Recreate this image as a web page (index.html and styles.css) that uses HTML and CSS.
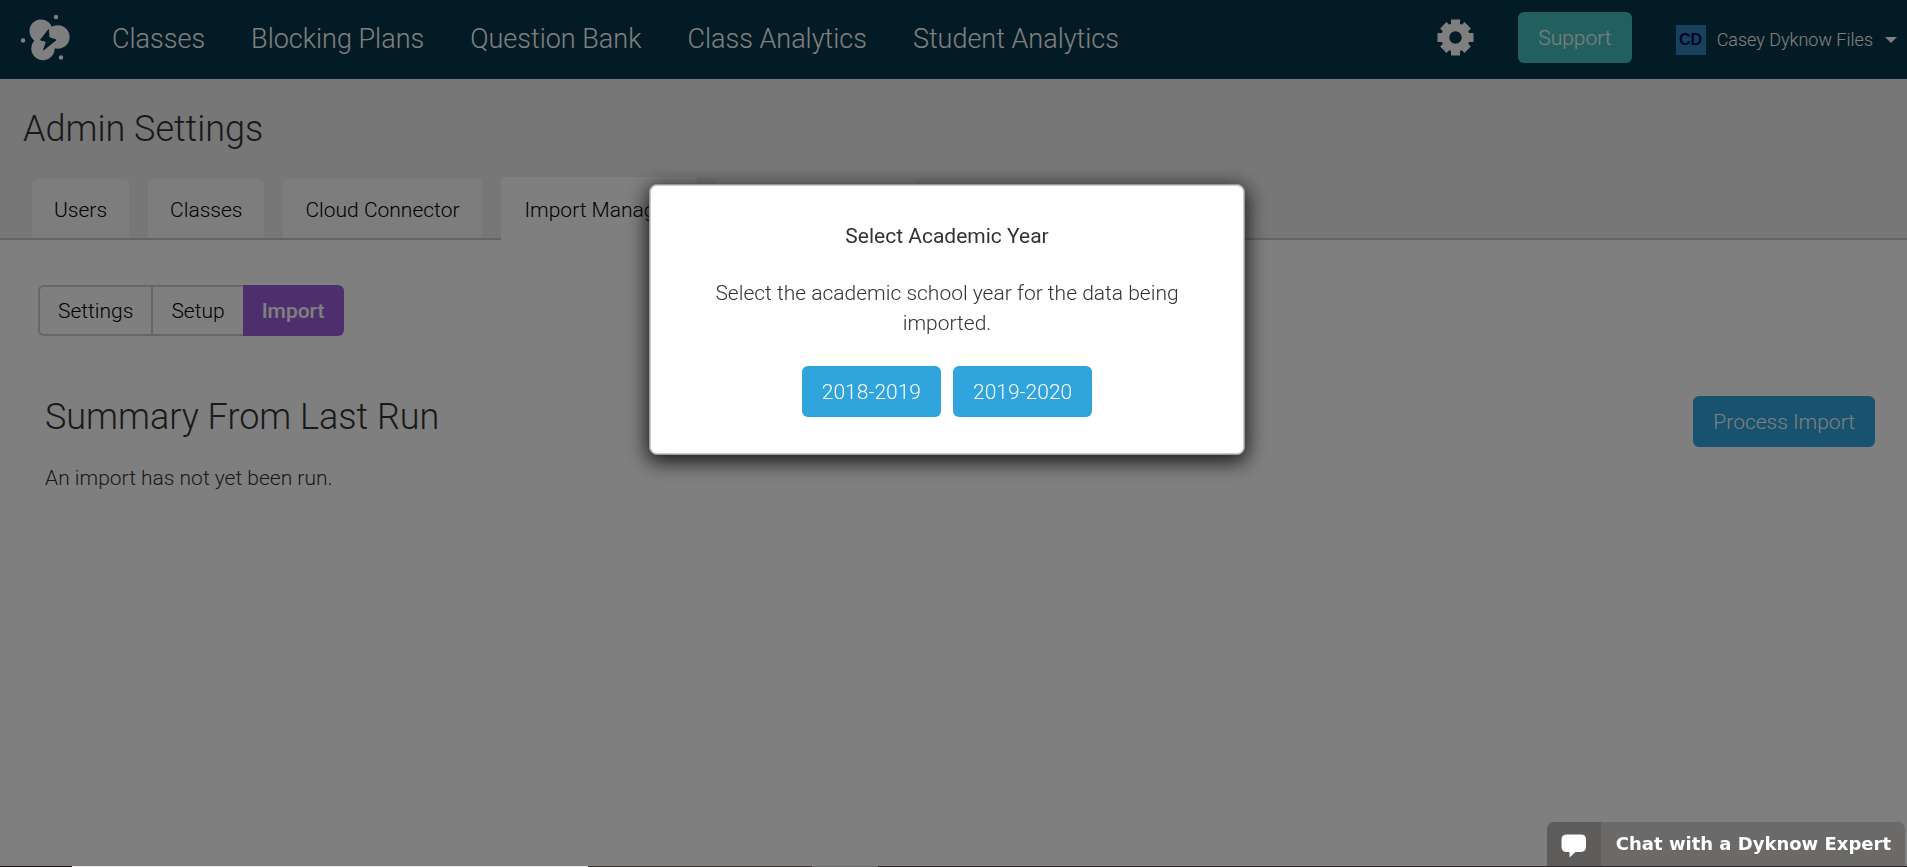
FILE: index.html
```html
<!DOCTYPE html>
<html lang="en">
<head>
    <meta charset="UTF-8">
    <meta name="viewport" content="width=device-width, initial-scale=1.0">
    <title>Admin Settings</title>
    <link rel="stylesheet" href="styles.css">
</head>
<body>
    <header class="navbar">
        <a href="#" class="logo" aria-label="Home">
            <svg width="50" height="48" viewBox="0 0 50 48">
                <g fill="#fff">
                    <circle cx="21" cy="17" r="11.5"/>
                    <circle cx="37.800" cy="23" r="11.800"/>
                    <circle cx="23" cy="34.500" r="11.700"/>
                    <path d="M21 17L37.800 23L23 34.500z" stroke="#fff" stroke-width="8" stroke-linejoin="round"/>
                    <circle cx="36" cy="3" r="2.200"/>
                    <circle cx="3" cy="26.500" r="2.200"/>
                    <circle cx="41" cy="43.500" r="2.200"/>
                </g>
                <path d="M28.500 15.500L20.500 26L26.500 27.500L23.500 36L36 26L29 23.500z" fill="#07364a" stroke="#07364a" stroke-width="1" stroke-linejoin="round"/>
            </svg>
        </a>
        <nav class="nav-links">
            <a href="#">Classes</a>
            <a href="#">Blocking Plans</a>
            <a href="#">Question Bank</a>
            <a href="#">Class Analytics</a>
            <a href="#">Student Analytics</a>
        </nav>
        <a href="#" class="gear" aria-label="Settings">
            <svg width="37" height="37" viewBox="0 0 37 37">
                <g stroke="#fff" stroke-width="9">
                    <path d="M18.500 0.500v8M18.500 28.500v8M0.500 18.500h8M28.500 18.500h8"/>
                    <path d="M6.300 6.300l5 5M25.700 25.700l5 5M6.300 30.700l5-5M25.700 11.300l5-5"/>
                </g>
                <circle cx="18.500" cy="18.500" r="10.200" fill="none" stroke="#fff" stroke-width="8"/>
            </svg>
        </a>
        <button type="button" class="btn btn-support">Support</button>
        <button type="button" class="user-menu">
            <span class="avatar">CD</span>
            <span>Casey Dyknow Files</span>
            <span class="caret"></span>
        </button>
    </header>

    <div class="page-head">
        <h1>Admin Settings</h1>
        <nav class="tabs">
            <a href="#" class="tab">Users</a>
            <a href="#" class="tab">Classes</a>
            <a href="#" class="tab">Cloud Connector</a>
            <a href="#" class="tab active">Import Manager</a>
            <a href="#" class="tab">Account Settings</a>
        </nav>
    </div>

    <main class="content">
        <div class="segments">
            <button type="button">Settings</button>
            <button type="button">Setup</button>
            <button type="button" class="active">Import</button>
        </div>
        <div class="summary">
            <div>
                <h2>Summary From Last Run</h2>
                <p>An import has not yet been run.</p>
            </div>
            <button type="button" class="btn btn-primary">Process Import</button>
        </div>
    </main>

    <!-- modal -->
    <div class="overlay">
        <div class="modal" role="dialog" aria-labelledby="modal-title">
            <h3 id="modal-title">Select Academic Year</h3>
            <p>Select the academic school year for the data being imported.</p>
            <div class="modal-buttons">
                <button type="button" class="btn btn-primary">2018-2019</button>
                <button type="button" class="btn btn-primary">2019-2020</button>
            </div>
        </div>
    </div>

    <!-- chat -->
    <button type="button" class="chat">
        <span class="chat-icon">
            <svg width="26" height="24" viewBox="0 0 26 24">
                <path fill="#fff" d="M6 0.500h14q5 0 5 5v7q0 5.500-6 5.500h-4.500l-6 5.500v-5.500h-2.500q-5.500 0-5.500-5.500v-7q0-5 5.500-5z"/>
            </svg>
        </span>
        <span class="chat-text">Chat with a Dyknow Expert</span>
    </button>
    <div class="bottom-strip"></div>
</body>
</html>
```
FILE: styles.css
```css
*{
    box-sizing: border-box;
}
body{
    margin: 0;
    background: #fff;
    color: #333;
    font-family: Roboto, sans-serif;
    font-size: 21px;
    font-weight: 300;
    line-height: 30px;
}
a{
    color: inherit;
    text-decoration: none;
}
button{
    font: inherit;
    color: inherit;
    border: 0;
    padding: 0;
    background: none;
    cursor: pointer;
}
h1,
h2{
    margin: 0;
    font-size: 36px;
    font-weight: 300;
    line-height: 42px;
}

/* navbar */
.navbar{
    display: flex;
    align-items: center;
    height: 79px;
    padding: 0 10px 4px 20px;
    background: #07364a;
    color: #fff;
}
.logo,
.gear{
    display: flex;
}
.nav-links{
    display: flex;
    gap: 46px;
    margin: 2px auto 0 42px;
    font-size: 27px;
}
.btn{
    height: 51px;
    padding: 0 20px;
    border-radius: 6px;
    color: #fff;
}
.btn-primary{
    background: #2fa4dd;
}
.btn-support{
    margin: 0 44px;
    background: #45c1c0;
}
.user-menu{
    display: flex;
    align-items: center;
    margin-top: 4px;
    font-size: 18px;
}
.avatar{
    width: 30px;
    margin-right: 11px;
    background: #3182bd;
    color: #000a55;
    font-family: "Liberation Sans", sans-serif;
    font-size: 16px;
    font-weight: 700;
}
.caret{
    margin-left: 12px;
    border: 6px solid transparent;
    border-top-color: #fff;
    border-bottom: 0;
}

/* title and tabs */
.page-head{
    padding: 29px 23px 0;
    background: #eee;
    border-bottom: 2px solid #c8c8c8;
}
.tabs{
    display: flex;
    align-items: flex-end;
    gap: 19px;
    margin: 27px 9px 0;
}
.tab{
    height: 59px;
    padding: 16px 22px 0;
    background: #fafafa;
    border-radius: 5px 5px 0 0;
    color: #000;
}
.tab.active{
    height: 63px;
    margin-bottom: -2px;
    padding: 18px 24px 0;
    background: #fff;
}

/* content */
.content{
    padding: 45px 32px 0 38px;
}
.segments{
    display: flex;
    color: #000;
}
.segments button{
    height: 51px;
    padding: 0 18px;
    border: 2px solid #ccc;
    border-right: 0;
}
.segments button:first-child{
    border-radius: 6px 0 0 6px;
}
.segments .active{
    padding: 0 19px;
    border: 0;
    border-radius: 0 6px 6px 0;
    background: #9c5fdd;
    color: #fff;
    font-weight: 500;
}
.summary{
    display: flex;
    justify-content: space-between;
    align-items: flex-start;
    margin-top: 60px;
    padding-left: 7px;
}
.summary p{
    margin: 25px 0 0;
}

/* modal */
.overlay{
    position: fixed;
    top: 0;
    right: 0;
    bottom: 0;
    left: 0;
    padding: 184px 13px 0 0;
    background: rgba(0, 0, 0, .5);
}
.modal{
    width: 596px;
    margin: 0 auto;
    padding: 36px 40px 37px;
    background: #fff;
    border: 1px solid #999;
    border-radius: 8px;
    box-shadow: inset 0 0 0 1px #ccc, 0 5px 20px 2px rgba(0, 0, 0, .8);
    text-align: center;
}
.modal h3{
    margin: 0;
    font-size: 21px;
    font-weight: 400;
}
.modal p{
    margin: 27px 0 28px;
}
.modal-buttons{
    display: flex;
    justify-content: center;
    gap: 12px;
}

/* chat */
.chat{
    position: fixed;
    right: 2px;
    bottom: 1px;
    display: flex;
    height: 44px;
    overflow: hidden;
    border-radius: 7px 7px 0 0;
    background: #6b6a68;
    color: #fff;
    font-family: "DejaVu Sans", sans-serif;
    font-size: 18px;
    font-weight: 700;
}
.chat-icon{
    display: flex;
    justify-content: center;
    align-items: center;
    width: 54px;
    height: 44px;
    padding-top: 4px;
    background: #5e5d5b;
}
.chat-text{
    padding: 0 14px 0 15px;
    line-height: 44px;
}
.bottom-strip{
    position: fixed;
    bottom: 0;
    left: 0;
    width: 100%;
    height: 1px;
    background: linear-gradient(90deg, #1c1718 72px, #e8e8e8 72px, #e8e8e8 588px, #3a3535 588px, #3a3535 812px, #666 812px, #666 878px, #2c2728 878px);
}
```
